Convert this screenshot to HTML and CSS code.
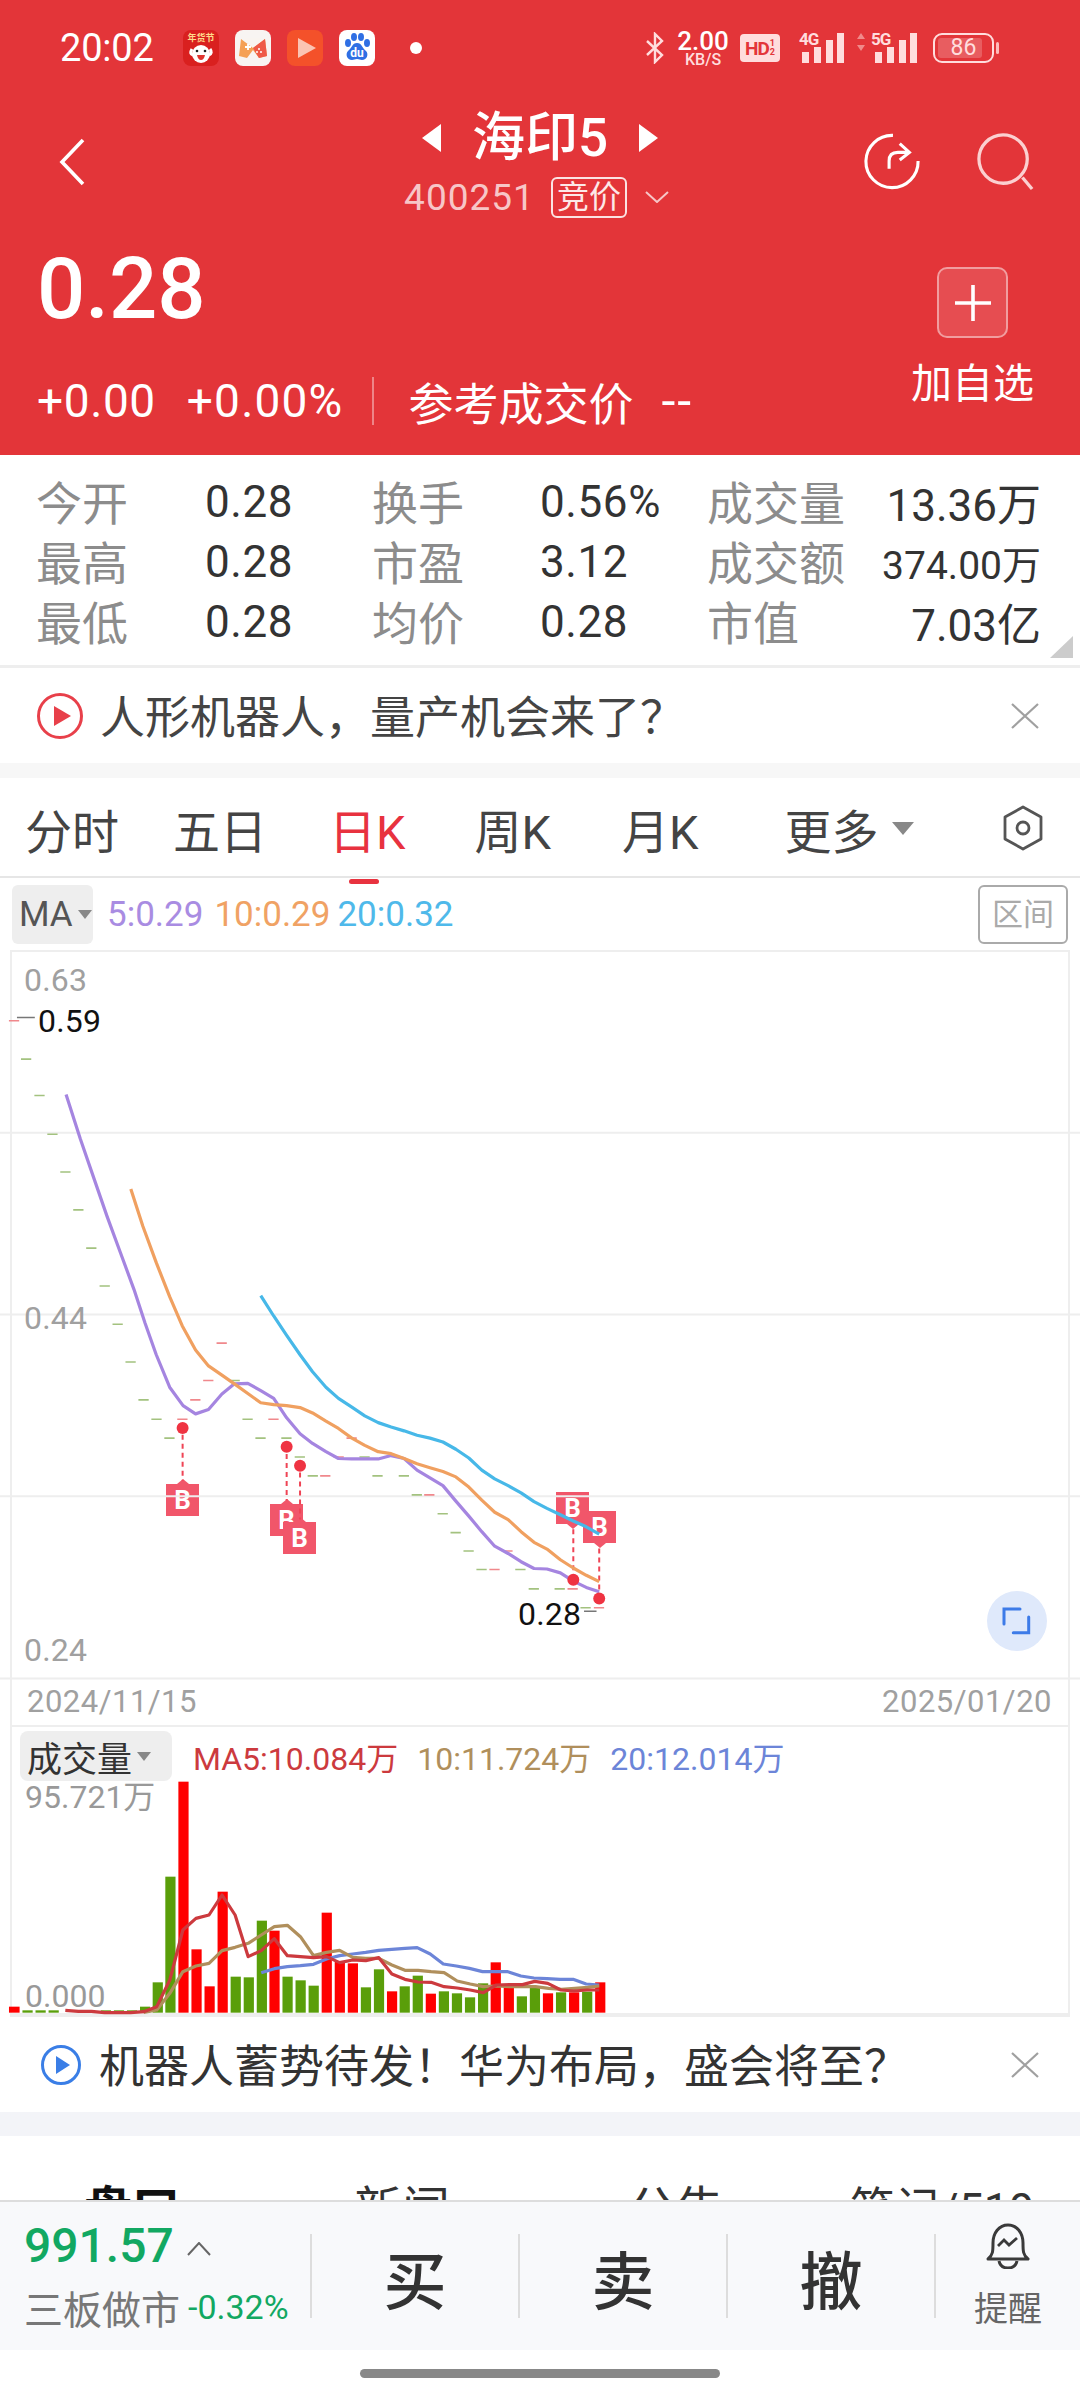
FILE: index.html
```html
<!DOCTYPE html>
<html lang="zh-CN">
<head>
  <meta charset="UTF-8">
  <meta name="viewport" content="width=device-width, initial-scale=1.0">
  <title>海印5</title>
  <link rel="stylesheet" href="styles.css">
</head>
<body>
<div class="page">

  <header class="quote-head">
    <div class="status">
      <span class="clock">20:02</span>
      <div class="app-icons">
        <svg class="app" viewBox="0 0 36 36">
          <rect width="36" height="36" rx="8" fill="#d9201f"/>
          <text x="18" y="11" class="app-tiny" text-anchor="middle">年货节</text>
          <path d="M9 19q-3 5 1 6M27 19q3 4-1 6" stroke="#fff" stroke-width="3" fill="none"/>
          <ellipse cx="18" cy="24" rx="9" ry="9" fill="#fff"/>
          <circle cx="14" cy="21" r="1.3" fill="#222"/><circle cx="22" cy="21" r="1.3" fill="#222"/>
          <path d="M14 25h8q-1 5-4 5t-4-5z" fill="#e0342f"/>
        </svg>
        <svg class="app" viewBox="0 0 36 36">
          <rect width="36" height="36" rx="8" fill="#f8f4f2"/>
          <path d="M6 9l12 9 12-9 2 17-8 2-6-8-6 8-8-2z" fill="#f5a055"/>
          <path d="M9 8h18l-9 9z" fill="#f9f4f0"/>
          <path d="M18 18L30 9l2 17-8 2z" fill="#ef5a48"/>
          <path d="M10 17h6M13 14v6" stroke="#fff" stroke-width="1.8"/>
          <circle cx="24" cy="19" r="1" fill="#fff"/><circle cx="22" cy="22" r="1" fill="#fff"/><circle cx="26" cy="22" r="1" fill="#fff"/>
        </svg>
        <svg class="app" viewBox="0 0 36 36">
          <rect width="36" height="36" rx="8" fill="#f4512a"/>
          <path d="M11 8l18 10-18 10z" fill="#fbc4b3"/>
        </svg>
        <svg class="app" viewBox="0 0 36 36">
          <rect width="36" height="36" rx="8" fill="#fff"/>
          <g fill="#2f6fe4">
            <ellipse cx="9" cy="13" rx="3" ry="4"/><ellipse cx="15" cy="7" rx="3" ry="4"/>
            <ellipse cx="22" cy="7" rx="3" ry="4"/><ellipse cx="28" cy="13" rx="3" ry="4"/>
            <path d="M18 13c5 0 5 5 9 8 3 3 1 9-4 9-2 0-3-1-5-1s-3 1-5 1c-5 0-7-6-4-9 4-3 4-8 9-8z"/>
          </g>
          <text x="18" y="27" class="app-du" text-anchor="middle">du</text>
        </svg>
      </div>
      <span class="status-dot"></span>
      <div class="status-right">
        <svg class="bt" viewBox="0 0 22 32"><path d="M3 9l15 14-7 7V2l7 7L3 23" fill="none" stroke="#fdd" stroke-width="2.4"/></svg>
        <div class="speed"><b>2.00</b><span>KB/S</span></div>
        <div class="hd">HD<small>1<br>2</small></div>
        <div class="signal">
          <span class="net">4G</span>
          <svg viewBox="0 0 45 30" class="bars"><rect x="3" y="19" width="7" height="11"/><rect x="15" y="14" width="7" height="16"/><rect x="27" y="7" width="7" height="23"/><rect x="38" y="0" width="7" height="30"/></svg>
        </div>
        <div class="signal five">
          <svg viewBox="0 0 10 18" class="updown"><path d="M5 0l4 6H1zM5 18l-4-6h8z"/></svg>
          <span class="net">5G</span>
          <svg viewBox="0 0 45 30" class="bars"><rect x="3" y="19" width="7" height="11"/><rect x="15" y="14" width="7" height="16"/><rect x="27" y="7" width="7" height="23"/><rect x="38" y="0" width="7" height="30"/></svg>
        </div>
        <div class="battery"><div class="battery-fill"></div><span>86</span></div>
      </div>
    </div>

    <div class="nav">
      <svg class="back" viewBox="0 0 26 48"><path d="M24 2L3 24l21 22" fill="none" stroke="#fff" stroke-width="3.6"/></svg>
      <div class="nav-title">
        <div class="name-row">
          <i class="tri tri-left"></i>
          <span class="name">海印5</span>
          <i class="tri tri-right"></i>
        </div>
        <div class="code-row">
          <span class="code">400251</span>
          <span class="tag">竞价</span>
          <svg class="drop" viewBox="0 0 24 12"><path d="M1 1l11 10L23 1" fill="none" stroke="#f7c6c7" stroke-width="2"/></svg>
        </div>
      </div>
      <div class="nav-actions">
        <svg viewBox="0 0 60 60"><path d="M31 2.500A27 27 0 1 0 57 29" fill="none" stroke="#fff" stroke-width="3.200"/><path d="M27 37V29q0-9 9-9h10M38 11l10 9-10 8" fill="none" stroke="#fff" stroke-width="3.200"/></svg>
        <svg viewBox="0 0 60 60"><circle cx="27" cy="27" r="25" fill="none" stroke="#fbd0d0" stroke-width="3.400"/><path d="M47 46l10 12" stroke="#fbd0d0" stroke-width="3.400"/></svg>
      </div>
    </div>

    <div class="quote-body">
      <div>
        <div class="last-price">0.28</div>
        <div class="change-row">
          <span>+0.00</span>
          <span class="pct">+0.00%</span>
          <i class="change-sep"></i>
          <span class="ref">参考成交价</span>
          <span class="ref-val">--</span>
        </div>
      </div>
      <div class="add-watch">
        <div class="add-btn"><svg viewBox="0 0 36 36"><path d="M18 0v36M0 18h36" stroke="#fff" stroke-width="3.600"/></svg></div>
        <div class="add-label">加自选</div>
      </div>
    </div>
  </header>

  <section class="stats">
    <span class="k">今开</span><span class="v">0.28</span><span class="k">换手</span><span class="v">0.56%</span><span class="k">成交量</span><span class="v end">13.36万</span>
    <span class="k">最高</span><span class="v">0.28</span><span class="k">市盈</span><span class="v">3.12</span><span class="k">成交额</span><span class="v end small">374.00万</span>
    <span class="k">最低</span><span class="v">0.28</span><span class="k">均价</span><span class="v">0.28</span><span class="k">市值</span><span class="v end">7.03亿</span>
    <i class="corner"></i>
  </section>

  <a class="ad">
    <svg class="ad-play" viewBox="0 0 46 46"><circle cx="23" cy="23" r="21.500" fill="none" stroke="#e8404a" stroke-width="3"/><path d="M17 13l17 10-17 10z" fill="#e8404a"/></svg>
    <span class="ad-text">人形机器人，量产机会来了？</span>
    <svg class="ad-close" viewBox="0 0 28 26"><path d="M1 1l26 24M27 1L1 25" stroke="#a0a0a0" stroke-width="2.200"/></svg>
  </a>
  <div class="band"></div>

  <nav class="period-tabs">
    <span class="t t1">分时</span>
    <span class="t t2">五日</span>
    <span class="t t3 on">日K</span>
    <span class="t t4">周K</span>
    <span class="t t5">月K</span>
    <span class="t t6">更多<i class="caret"></i></span>
    <svg class="hex" viewBox="0 0 42 46"><path d="M21 2l18 10v22L21 44 3 34V12z" fill="none" stroke="#555" stroke-width="2.800" stroke-linejoin="round"/><circle cx="21" cy="23" r="6" fill="none" stroke="#555" stroke-width="2.800"/></svg>
  </nav>

  <div class="ma-row">
    <div class="ma-btn">MA<i class="caret small"></i></div>
    <span class="ma5">5:0.29</span>
    <span class="ma10">10:0.29</span>
    <span class="ma20">20:0.32</span>
    <div class="range-btn">区间</div>
  </div>

  <section class="kline">
    <div class="b-mark up m1">B</div>
    <div class="b-mark up m2">B</div>
    <div class="b-mark up m3">B</div>
    <div class="b-mark down m4">B</div>
    <div class="b-mark down m5">B</div>

    <!-- coordinates are the reference crop's, viewBox maps them onto the box -->
    <svg class="kline-svg" viewBox="26.900 4 2365 1500" preserveAspectRatio="none">
      <g class="grid">
        <path d="M0 377H2500M0 752H2500M0 1127H2500M0 1503H2500"/>
      </g>
      <path class="doji green" d="M47 225h23M77 300h23M106 380h23M135 458h23M164 536h23M193 615h23M223 693h23M252 772h23M281 850h23M310 928h23M339 968h23M368 1007h23M514 888h23M543 968h23M572 1007h23M630 1007h23M660 1046h23M689 1085h23M805 1046h23M834 1085h23M893 1085h23M922 1124h23M980 1163h23M1009 1202h23M1038 1240h23M1067 1278h23M1154 1278h23M1184 1318h23M1242 1318h23M1300 1357h23"/>
      <path class="doji red" d="M20 146h23M397 968h23M426 928h23M455 888h23M485 811h23M601 968h23M717 1085h23M747 1046h23M776 1007h23M950 1124h23M1125 1240h23M1096 1278h23M1271 1318h23M1330 1357h23"/>
      <path class="leader" d="M38 139h40M1308 1364h28"/>
      <path class="b-link" d="M409 1000V1095M642 1040V1135M672 1078V1175M1284 1195V1290M1342 1235V1325"/>
      <polyline class="line purple" points="148,298 180,390 210,470 240,550 270,625 300,700 325,770 350,835 380,902 410,940 438,957 467,948 497,916 525,895 555,894 584,909 613,925 642,965 672,998 700,1018 730,1035 758,1049 788,1050 847,1050 876,1043 905,1049 934,1073 963,1089 992,1105 1021,1137 1050,1168 1079,1200 1108,1230 1138,1245 1167,1262 1196,1276 1225,1277 1255,1285 1284,1302 1313,1315 1342,1324"/>
      <polyline class="line orange" points="293,493 320,570 350,645 380,715 408,775 438,825 467,858 497,877 525,895 555,915 584,934 613,938 642,940 672,944 700,955 730,972 758,987 788,1007 817,1022 847,1035 876,1039 905,1049 934,1060 963,1068 992,1076 1021,1087 1050,1108 1079,1135 1108,1160 1138,1175 1167,1200 1196,1222 1225,1236 1255,1258 1284,1275 1313,1290 1342,1303"/>
      <polyline class="line sky" points="584,713 613,755 642,795 672,835 700,870 730,902 758,925 788,943 817,961 847,975 876,984 905,992 934,1001 963,1007 992,1015 1021,1030 1050,1048 1079,1073 1108,1091 1138,1105 1167,1120 1196,1138 1225,1152 1255,1165 1284,1178 1313,1190 1342,1205"/>
      <g class="b-dot">
        <ellipse cx="409" cy="986" rx="13.400" ry="12.400"/>
        <ellipse cx="642" cy="1025" rx="13.400" ry="12.400"/>
        <ellipse cx="672" cy="1064" rx="13.400" ry="12.400"/>
        <ellipse cx="1284" cy="1299" rx="13.400" ry="12.400"/>
        <ellipse cx="1342" cy="1338" rx="13.400" ry="12.400"/>
      </g>
    </svg>

    <span class="axis a1">0.63</span>
    <span class="axis a2">0.44</span>
    <span class="axis a3">0.24</span>
    <span class="extreme hi">0.59</span>
    <span class="extreme lo">0.28</span>
    <div class="zoom-btn">
      <svg viewBox="0 0 30 30"><path d="M2 18V3h16M26.700 11v15.700H11.300" fill="none" stroke="#3d7be8" stroke-width="3" stroke-linecap="round"/></svg>
    </div>
  </section>

  <div class="date-row"><span>2024/11/15</span><span>2025/01/20</span></div>

  <section class="volume">
    <svg class="vol-svg" viewBox="29.400 -159 2587 858" preserveAspectRatio="none">
      <g class="bar-r">
        <rect x="22" y="680" width="26" height="18"/>
        <rect x="437" y="5" width="25" height="693"/>
        <rect x="469" y="508" width="25" height="190"/>
        <rect x="501" y="619" width="25" height="79"/>
        <rect x="533" y="335" width="25" height="363"/>
        <rect x="660" y="452" width="25" height="246"/>
        <rect x="788" y="398" width="25" height="300"/>
        <rect x="820" y="545" width="25" height="153"/>
        <rect x="852" y="550" width="25" height="148"/>
        <rect x="948" y="634" width="25" height="64"/>
        <rect x="1043" y="641" width="25" height="57"/>
        <rect x="1202" y="547" width="25" height="151"/>
        <rect x="1234" y="620" width="25" height="78"/>
        <rect x="1330" y="640" width="25" height="58"/>
        <rect x="1394" y="637" width="25" height="61"/>
        <rect x="1458" y="607" width="25" height="91"/>
      </g>
      <g class="bar-g">
        <rect x="55" y="691" width="25" height="7"/>
        <rect x="87" y="691" width="25" height="7"/>
        <rect x="119" y="691" width="25" height="7"/>
        <rect x="247" y="691" width="25" height="7"/>
        <rect x="279" y="691" width="25" height="7"/>
        <rect x="311" y="691" width="25" height="7"/>
        <rect x="343" y="680" width="25" height="18"/>
        <rect x="374" y="607" width="25" height="91"/>
        <rect x="405" y="290" width="25" height="408"/>
        <rect x="565" y="590" width="25" height="108"/>
        <rect x="597" y="592" width="25" height="106"/>
        <rect x="629" y="422" width="25" height="276"/>
        <rect x="692" y="590" width="25" height="108"/>
        <rect x="724" y="601" width="25" height="97"/>
        <rect x="756" y="617" width="25" height="81"/>
        <rect x="884" y="622" width="25" height="76"/>
        <rect x="916" y="568" width="25" height="130"/>
        <rect x="979" y="619" width="25" height="79"/>
        <rect x="1011" y="587" width="25" height="111"/>
        <rect x="1075" y="634" width="25" height="64"/>
        <rect x="1107" y="640" width="25" height="58"/>
        <rect x="1139" y="652" width="25" height="46"/>
        <rect x="1171" y="610" width="25" height="88"/>
        <rect x="1266" y="649" width="25" height="49"/>
        <rect x="1298" y="620" width="25" height="78"/>
        <rect x="1362" y="637" width="25" height="61"/>
        <rect x="1426" y="635" width="25" height="63"/>
      </g>
      <polyline class="line v-blue" points="640,578 672,566 704,560 736,557 768,553 800,537 832,527 864,522 896,517 928,511 960,508 992,505 1022,503 1054,522 1086,552 1118,558 1150,565 1182,575 1214,575 1244,575 1276,588 1308,594 1340,596 1372,598 1404,598 1436,612 1468,615"/>
      <polyline class="line v-tan" points="352,697 384,690 416,640 448,575 480,558 512,550 544,512 576,502 608,490 640,465 672,440 704,436 736,470 768,527 800,517 832,511 864,532 896,535 928,535 960,555 992,571 1024,571 1056,575 1088,578 1120,603 1152,612 1184,620 1216,618 1248,620 1280,620 1312,620 1344,625 1376,628 1408,625 1440,622 1468,618"/>
      <polyline class="line v-red" points="160,691 192,694 224,694 256,698 288,698 320,698 352,695 384,680 416,600 448,450 480,415 512,405 544,345 576,405 608,530 640,512 672,476 704,527 736,530 768,533 800,530 832,548 864,540 896,542 928,533 960,582 992,598 1024,606 1056,607 1088,620 1120,624 1152,630 1184,638 1216,615 1248,614 1280,614 1310,604 1342,610 1374,630 1406,633 1438,630 1468,630"/>
    </svg>
    <div class="vol-head">
      <div class="vol-btn">成交量<i class="caret small"></i></div>
      <span class="vma5">MA5:10.084万</span>
      <span class="vma10">10:11.724万</span>
      <span class="vma20">20:12.014万</span>
    </div>
    <span class="vol-axis top">95.721万</span>
    <span class="vol-axis bottom">0.000</span>
  </section>

  <a class="ad ad-blue">
    <svg class="ad-play" viewBox="0 0 40 40"><circle cx="20" cy="20" r="18.500" fill="none" stroke="#3a7ee6" stroke-width="3"/><path d="M15 11l14 9-14 9z" fill="#3a7ee6"/></svg>
    <span class="ad-text">机器人蓄势待发！华为布局，盛会将至？</span>
    <svg class="ad-close" viewBox="0 0 28 26"><path d="M1 1l26 24M27 1L1 25" stroke="#a0a0a0" stroke-width="2.200"/></svg>
  </a>
  <div class="band band-wide"></div>

  <div class="info-tabs">
    <span class="i1">盘口</span>
    <span class="i2">新闻</span>
    <span class="i3">公告</span>
    <span class="i4">笔记/519</span>
  </div>

  <footer class="trade-bar">
    <div class="index-cell">
      <div class="index-top"><span class="index-val">991.57</span>
        <svg viewBox="0 0 24 14"><path d="M1 13L12 1l11 12" fill="none" stroke="#666" stroke-width="2"/></svg>
      </div>
      <div class="index-sub"><span class="index-name">三板做市</span><span class="index-pct">-0.32%</span></div>
    </div>
    <div class="bar-cell act">买</div>
    <div class="bar-cell act">卖</div>
    <div class="bar-cell act">撤</div>
    <div class="bar-cell remind">
      <svg viewBox="0 0 46 46"><path d="M3 36c5-4 5-8 5-16C8 10 14 2 23 2s15 8 15 18c0 8 0 12 5 16z" fill="none" stroke="#3a3a3a" stroke-width="3" stroke-linejoin="round"/><path d="M14 38c1 5 5 7 9 7s8-2 9-7" fill="none" stroke="#3a3a3a" stroke-width="3"/><path d="M13 23l6-6 5 5 8-7" fill="none" stroke="#3a3a3a" stroke-width="2.800"/></svg>
      <span>提醒</span>
    </div>
  </footer>
  <div class="home-area"><i class="home-bar"></i></div>
</div>
</body>
</html>
```

FILE: styles.css
```css
* { box-sizing: border-box; }

body {
  margin: 0;
  background: #fff;
  color: #333;
  font-family: Roboto, "Noto Sans CJK SC", sans-serif;
}

.page {
  width: 1080px;
  height: 2400px;
  overflow: hidden;
}

i { display: block; font-style: normal; }

/* red quote header */
.quote-head {
  height: 455px;
  background: #e33539;
  color: #fff;
}

.status {
  display: flex;
  align-items: center;
  height: 96px;
  padding-left: 60px;
}
.clock { font-size: 38px; width: 94px; letter-spacing: -.2px; white-space: nowrap; }
.app-icons { display: flex; gap: 16px; margin-left: 29px; }
.app { width: 36px; height: 36px; display: block; }
.app-tiny { font-size: 9px; fill: #ffd98a; font-weight: 700; }
.app-du { font-size: 12px; fill: #fff; font-weight: 700; }
.status-dot { width: 12px; height: 12px; margin-left: 35px; border-radius: 50%; background: #fff; }

.status-right {
  display: flex;
  align-items: center;
  margin-left: auto;
  padding-right: 86px;
  color: #fdd;
}
.bt { width: 22px; height: 32px; }
.speed {
  display: flex;
  flex-direction: column;
  align-items: center;
  margin-left: 10px;
  width: 54px;
  line-height: 1;
}
.speed b { font-size: 26px; font-weight: 500; color: #fff; line-height: 22px; }
.speed span { font-size: 16px; font-weight: 500; line-height: 15px; }
.hd {
  display: flex;
  align-items: center;
  justify-content: center;
  width: 40px;
  height: 28px;
  margin-left: 10px;
  background: #fdd;
  border-radius: 4px;
  color: #e33539;
  font-size: 19px;
  font-weight: 700;
  letter-spacing: -1px;
}
.hd small { font-size: 9px; line-height: 9px; margin-left: 1px; letter-spacing: 0; }
.signal { position: relative; width: 45px; height: 30px; margin-left: 19px; }
.signal.five { width: 61px; margin-left: 12px; }
.net {
  position: absolute;
  top: -3px;
  left: 0;
  font-size: 17px;
  font-weight: 700;
  letter-spacing: -1px;
  line-height: 18px;
}
.five .net { left: 15px; }
.bars { position: absolute; left: 0; bottom: 0; width: 45px; height: 30px; fill: #fdd; }
.five .bars { left: 16px; }
.updown { position: absolute; left: 0; top: 0; width: 10px; height: 18px; fill: #f08a8a; }
.battery {
  position: relative;
  width: 61px;
  height: 30px;
  margin-left: 16px;
  border: 2px solid #fdd;
  border-radius: 9px;
  font-size: 23px;
  line-height: 26px;
  text-align: center;
}
.battery::after {
  content: "";
  position: absolute;
  right: -7px;
  top: 7px;
  width: 3px;
  height: 12px;
  border-radius: 2px;
  background: #fbb;
}
.battery-fill {
  position: absolute;
  left: 3px;
  top: 3px;
  bottom: 3px;
  width: 44px;
  border-radius: 3px;
  background: rgba(255, 255, 255, .2);
}
.battery span { position: relative; }

.nav {
  display: grid;
  grid-template-columns: 1fr auto 1fr;
  height: 130px;
  padding: 0 45px;
}
.back { width: 26px; height: 48px; margin: 42px 0 0 14px; }
.nav-title { display: flex; flex-direction: column; align-items: center; padding-top: 12px; }
.name-row { display: flex; align-items: center; height: 60px; gap: 31px; }
.name { font-size: 53px; font-weight: 500; line-height: 60px; }
.tri { width: 0; height: 0; border-top: 14px solid transparent; border-bottom: 14px solid transparent; }
.tri-left { border-right: 19px solid #fff; }
.tri-right { border-left: 19px solid #fff; }
.code-row { display: flex; align-items: center; height: 42px; margin: 8px 7px 0 0; color: #f7c6c7; }
.code { font-size: 37px; letter-spacing: 1px; }
.tag {
  width: 76px;
  height: 41px;
  margin-left: 16px;
  border: 2px solid #fbe3e3;
  border-radius: 6px;
  color: #fde8e8;
  font-size: 32px;
  line-height: 36px;
  text-align: center;
}
.drop { width: 24px; height: 12px; margin-left: 18px; }
.nav-actions { display: flex; justify-content: flex-end; gap: 56px; padding-top: 37px; }
.nav-actions svg { width: 58px; height: 58px; }

.quote-body { display: flex; justify-content: space-between; padding: 13px 45px 0 37px; }
.last-price { font-size: 85px; font-weight: 500; line-height: 100px; }
.change-row { display: flex; align-items: center; height: 50px; margin-top: 37px; font-size: 46px; letter-spacing: .6px; white-space: nowrap; }
.pct { margin-left: 31px; letter-spacing: 1.200px; }
.change-sep { width: 2px; height: 48px; margin: 0 34px 0 29px; background: rgba(255, 255, 255, .4); }
.ref { font-size: 45px; letter-spacing: 0; }
.ref-val { margin-left: 28px; letter-spacing: 2px; font-size: 50px; }
.add-watch { display: flex; flex-direction: column; align-items: center; width: 125px; margin-top: 28px; }
.add-btn {
  display: flex;
  align-items: center;
  justify-content: center;
  width: 71px;
  height: 71px;
  background: rgba(255, 255, 255, .12);
  border: 2px solid rgba(255, 255, 255, .45);
  border-radius: 10px;
}
.add-btn svg { width: 36px; height: 36px; }
.add-label { margin-top: 21px; font-size: 41px; line-height: 50px; white-space: nowrap; }

/* stats grid */
.stats {
  position: relative;
  display: grid;
  grid-template-columns: 169px 167px 168px 167px 150px 184px;
  grid-auto-rows: 60px;
  align-items: center;
  height: 213px;
  padding: 16px 0 0 36px;
  border-bottom: 3px solid #eee;
}
.k { margin-top: -3px; color: #8c8c8c; font-size: 46px; white-space: nowrap; }
.v { margin-top: 1px; color: #333; font-size: 44px; letter-spacing: .6px; white-space: nowrap; }
.v.end { text-align: right; font-size: 44px; letter-spacing: 0; }
.v.small { font-size: 39px; }
.corner {
  position: absolute;
  right: 7px;
  bottom: 7px;
  width: 0;
  height: 0;
  border-left: 23px solid transparent;
  border-bottom: 22px solid #ccc;
}

/* news strip */
.ad {
  display: flex;
  align-items: center;
  height: 95px;
  padding: 0 41px 0 37px;
}
.ad-play { width: 46px; height: 46px; flex: none; }
.ad-text { margin: -2px 0 0 17px; color: #444; font-size: 45px; white-space: nowrap; }
.ad-close { width: 28px; height: 26px; margin-left: auto; }
.ad-blue .ad-play { width: 40px; height: 40px; margin-left: 4px; }
.ad-blue .ad-text { margin-left: 18px; color: #333; }

.band { height: 15px; background: #f7f7f7; }
.band-wide { height: 24px; background: #f3f4f8; }

/* period tabs */
.period-tabs {
  position: relative;
  display: flex;
  align-items: center;
  height: 100px;
  padding-left: 25px;
  border-bottom: 2px solid #e6e6e6;
  font-size: 47px;
  color: #444;
}
.t { white-space: nowrap; margin-top: 2px; }
.t2 { margin-left: 54px; }
.t3 { margin-left: 62px; }
.t4 { margin-left: 69px; }
.t5 { margin-left: 71px; }
.t6 { display: flex; align-items: center; margin-left: 86px; }
.on { position: relative; color: #e8323f; }
.on::after {
  content: "";
  position: absolute;
  left: 20px;
  bottom: -21px;
  width: 30px;
  height: 5px;
  border-radius: 3px;
  background: #e8323f;
}
.caret {
  width: 0;
  height: 0;
  margin-left: 13px;
  border-left: 11px solid transparent;
  border-right: 11px solid transparent;
  border-top: 13px solid #888;
}
.caret.small {
  margin-left: 5px;
  border-left-width: 7px;
  border-right-width: 7px;
  border-top-width: 9px;
}
.hex { position: absolute; right: 36px; top: 27px; width: 42px; height: 46px; }

.ma-row {
  position: relative;
  display: flex;
  align-items: center;
  height: 72px;
  padding-left: 12px;
  font-size: 35px;
}
.ma-btn {
  display: flex;
  align-items: center;
  width: 81px;
  height: 59px;
  padding-left: 7px;
  border-radius: 6px;
  background: #eee;
  color: #555;
}
.ma5 { margin-left: 14px; color: #a98ce2; }
.ma10 { margin-left: 11px; color: #f0a264; }
.ma20 { margin-left: 7px; color: #4fb9ea; }
.range-btn {
  margin-left: auto;
  margin-right: 12px;
  width: 90px;
  height: 59px;
  border: 2px solid #aaa;
  border-radius: 6px;
  color: #aaa;
  font-size: 31px;
  line-height: 55px;
  text-align: center;
}

/* candle chart */
.kline {
  position: relative;
  height: 729px;
  margin: 0 10px;
  border: 2px solid #eee;
  border-bottom: 0;
}
.kline-svg, .vol-svg {
  position: absolute;
  top: 0;
  left: 0;
  width: 100%;
  height: 100%;
  overflow: visible;
}
.grid path { fill: none; stroke: #eee; stroke-width: 2; vector-effect: non-scaling-stroke; }
.doji { fill: none; stroke-width: 1.600; vector-effect: non-scaling-stroke; }
.doji.green { stroke: #a3c27f; }
.doji.red { stroke: #f0888c; }
.leader { fill: none; stroke: #777; stroke-width: 1.500; vector-effect: non-scaling-stroke; }
.b-link { fill: none; stroke: #ef4455; stroke-width: 2; stroke-dasharray: 5 4; vector-effect: non-scaling-stroke; }
.b-dot { fill: #ef3342; }
.line { fill: none; stroke-width: 3.200; stroke-linejoin: round; vector-effect: non-scaling-stroke; }
.purple { stroke: #a585e0; }
.orange { stroke: #f0a060; }
.sky { stroke: #47b8e8; }

.b-mark {
  position: absolute;
  width: 33px;
  height: 32px;
  background: #f1566a;
  color: #fff;
  font-size: 26px;
  font-weight: 700;
  line-height: 32px;
  text-align: center;
}
.b-mark::after {
  content: "";
  position: absolute;
  left: 11px;
  width: 0;
  height: 0;
  border-left: 6px solid transparent;
  border-right: 6px solid transparent;
}
.b-mark.up::after { top: -5px; border-bottom: 5px solid #f1566a; }
.b-mark.down::after { bottom: -5px; border-top: 5px solid #f1566a; }
.m1 { left: 154px; top: 532px; }
.m2 { left: 258px; top: 552px; }
.m3 { left: 271px; top: 570px; }
.m4 { left: 544px; top: 540px; }
.m5 { left: 571px; top: 559px; }

.axis, .extreme { position: absolute; font-size: 32px; line-height: 30px; letter-spacing: .2px; }
.axis { left: 12px; color: #a0a0a0; }
.a1 { top: 13px; }
.a2 { top: 351px; }
.a3 { top: 683px; }
.extreme { color: #111; }
.hi { left: 26px; top: 54px; }
.lo { left: 506px; top: 647px; }
.zoom-btn {
  position: absolute;
  right: 21px;
  top: 639px;
  display: flex;
  align-items: center;
  justify-content: center;
  width: 60px;
  height: 60px;
  border-radius: 50%;
  background: #dfe9fb;
}
.zoom-btn svg { width: 30px; height: 30px; }

.date-row {
  display: flex;
  justify-content: space-between;
  height: 46px;
  margin: 0 10px;
  padding: 0 16px 0 15px;
  border: solid #eee;
  border-width: 0 2px;
  color: #a0a0a0;
  font-size: 31px;
  letter-spacing: .5px;
  line-height: 46px;
}

/* volume chart */
.volume {
  position: relative;
  height: 292px;
  margin: 0 10px;
  border: solid #eee;
  border-width: 2px 2px 4px;
}
.bar-r { fill: #f00; }
.bar-g { fill: #5a9e0a; }
.v-red { stroke: #cc3a3e; }
.v-tan { stroke: #b08f5c; }
.v-blue { stroke: #6c85d8; }
.vol-head {
  position: relative;
  display: flex;
  align-items: center;
  height: 50px;
  margin: 4px 0 0 8px;
  font-size: 32px;
}
.vol-btn {
  display: flex;
  align-items: center;
  width: 152px;
  height: 50px;
  padding-left: 7px;
  border-radius: 8px;
  background: #eee;
  color: #333;
  font-size: 35px;
}
.vma5 { margin-left: 21px; color: #cc3a3e; }
.vma10 { margin-left: 19px; color: #b08f5c; }
.vma20 { margin-left: 19px; color: #6c85d8; }
.vol-axis { position: absolute; left: 13px; color: #999; font-size: 32px; line-height: 32px; }
.vol-axis.top { top: 54px; }
.vol-axis.bottom { top: 253px; }

/* tabs cut off by the bottom bar */
.info-tabs {
  position: relative;
  height: 64px;
  overflow: hidden;
  color: #333;
  font-size: 48px;
  line-height: 60px;
}
.info-tabs span { position: absolute; top: 44px; white-space: nowrap; }
.i1 { left: 84px; color: #111; font-weight: 700; }
.i2 { left: 354px; }
.i3 { left: 628px; }
.i4 { left: 850px; font-size: 45px; }

/* bottom trade bar */
.trade-bar {
  display: flex;
  align-items: center;
  height: 150px;
  border-top: 2px solid #ddd;
  background: #f8f9fb;
}
.index-cell { width: 310px; padding-left: 24px; }
.index-top { display: flex; align-items: center; height: 46px; }
.index-top svg { width: 24px; height: 14px; margin: 8px 0 0 13px; }
.index-val { color: #12a862; font-size: 48px; font-weight: 500; }
.index-sub { display: flex; align-items: center; height: 46px; margin-top: 16px; white-space: nowrap; }
.index-name { color: #777; font-size: 39px; }
.index-pct { margin-left: 8px; color: #12a862; font-size: 34px; }
.bar-cell {
  display: flex;
  align-items: center;
  justify-content: center;
  width: 208px;
  height: 84px;
  border-left: 2px solid #ddd;
}
.act { color: #333; font-size: 63px; font-weight: 500; }
.remind { flex-direction: column; width: 146px; color: #666; font-size: 34px; }
.remind svg { width: 46px; height: 46px; flex: none; margin-bottom: 20px; }
.remind span { line-height: 40px; }

.home-area { display: flex; justify-content: center; height: 49px; padding-top: 19px; }
.home-bar { width: 360px; height: 9px; border-radius: 5px; background: #888; }
```
